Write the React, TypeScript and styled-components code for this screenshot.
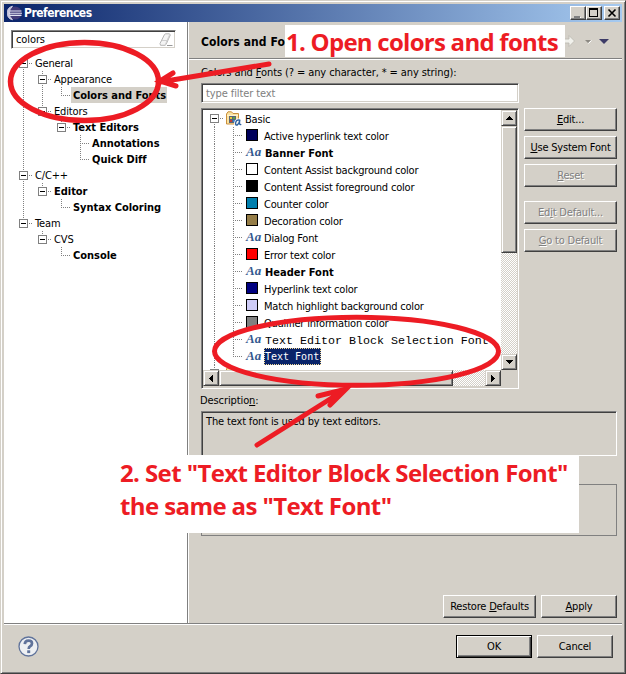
import React from 'react';
import styled, { createGlobalStyle, css } from 'styled-components';

const FACE = '#d4d0c8';
const RED = '#ed1c24';

const GlobalStyle = createGlobalStyle`
  * { box-sizing: border-box; }
  html, body { margin: 0; padding: 0; overflow: hidden; }
  body {
    font: 11px/14px "DejaVu Sans Condensed", "DejaVu Sans", sans-serif;
    font-stretch: condensed;
    letter-spacing: -0.1px;
    color: #000;
  }
  u { text-decoration: underline; text-underline-offset: 1px; text-decoration-thickness: 1px; }
`;

const raised = css`
  background: ${FACE};
  border: 1px solid;
  border-color: #fff #404040 #404040 #fff;
  box-shadow: inset -1px -1px 0 #808080;
`;
const sunken = css`
  border: 1px solid;
  border-color: #808080 #fff #fff #808080;
  box-shadow: inset 1px 1px 0 #404040, inset -1px -1px 0 ${FACE};
`;

const Window = styled.div`
  position: relative;
  width: 626px;
  height: 674px;
  background: ${FACE};
  border: 1px solid;
  border-color: ${FACE} #404040 #404040 ${FACE};
  box-shadow: inset 1px 1px 0 #fff, inset -1px -1px 0 #808080;
  padding: 3px;
  display: flex;
  flex-direction: column;
`;
const TitleBar = styled.header`
  height: 18px;
  flex: none;
  display: flex;
  align-items: center;
  padding: 0 2px 0 3px;
  background: linear-gradient(to right, #0a246a, #a6caf0);
`;
const Title = styled.h1`
  flex: 1;
  margin: 0 0 0 2px;
  color: #fff;
  font-size: 12px;
  line-height: 18px;
  font-weight: bold;
  letter-spacing: -0.5px;
`;
const WinButton = styled.button<{ $gap?: number }>`
  ${raised}
  width: 16px;
  height: 14px;
  padding: 0;
  margin-left: ${(p) => p.$gap ?? 0}px;
  display: flex;
  svg { display: block; }
`;
const Main = styled.div`
  display: flex;
  height: 601px;
  flex: none;
`;
const Sidebar = styled.aside`
  width: 185px;
  flex: none;
  background: #fff;
  border-right: 1px solid #fff;
  box-shadow: inset -1px 0 0 #808080;
  padding: 8px 0 0;
`;
const SearchBox = styled.div`
  ${sunken}
  width: 165px;
  height: 19px;
  margin: 0 0 6px 7px;
  padding: 0 2px 0 4px;
  display: flex;
  align-items: center;
  justify-content: space-between;
`;
const SideTree = styled.div`
  padding-left: 10px;
`;
const TreeRow = styled.div<{ $h: number }>`
  display: flex;
  align-items: center;
  height: ${(p) => p.$h}px;
  white-space: nowrap;
`;

const dotsV = 'repeating-linear-gradient(to bottom, #808080 0 1px, transparent 1px 2px)';
const dotsH = 'repeating-linear-gradient(to right, #808080 0 1px, transparent 1px 2px)';

/* One 19px indentation column: line above, line below, and a branch to the right. */
const Guide = styled.span<{ $up?: boolean; $down?: boolean; $branch?: boolean }>`
  width: 19px;
  height: 100%;
  flex: none;
  display: flex;
  align-items: flex-start;
  padding: 4px 0 0 5px;
  background:
    ${dotsV} 9px 0 / 1px ${(p) => (p.$up ? '9px' : '0')} no-repeat,
    ${dotsV} 9px 8px / 1px ${(p) => (p.$down ? '9px' : '0')} no-repeat,
    ${dotsH} 9px 8px / ${(p) => (p.$branch ? '10px' : '0')} 1px no-repeat;
`;
const Toggle = styled.span`
  width: 9px;
  height: 9px;
  border: 1px solid #808080;
  background: linear-gradient(#000, #000) center / 5px 1px no-repeat #fff;
`;
const NodeText = styled.span<{ $bold?: boolean; $active?: boolean }>`
  height: 16px;
  line-height: 18px;
  padding: 0 1px 0 2px;
  letter-spacing: ${(p) => (p.$bold ? '-0.03px' : '-0.15px')};
  font-weight: ${(p) => (p.$bold ? 'bold' : 'normal')};
  background: ${(p) => (p.$active ? FACE : 'transparent')};
`;

const Page = styled.section`
  flex: 1;
  min-width: 0;
`;
const PageHeader = styled.div`
  height: 38px;
  display: flex;
  align-items: center;
  justify-content: space-between;
  padding: 1px 12px 0 12px;
  border-bottom: 1px solid #fff;
  box-shadow: inset 0 -1px 0 #808080;
`;
const PageTitle = styled.h2`
  margin: 2px 0 0;
  font-size: 12px;
  font-weight: bold;
  letter-spacing: 0.1px;
`;
const PageBody = styled.div`
  padding: 5px 5px 0 12px;
`;
const FieldLabel = styled.div<{ $h: number; $shift?: number; $top?: number }>`
  height: ${(p) => p.$h}px;
  line-height: 16px;
  padding-top: ${(p) => p.$top ?? 0}px;
  margin-left: ${(p) => p.$shift ?? 0}px;
`;
const FilterInput = styled.div`
  ${sunken}
  width: 318px;
  height: 20px;
  background: #fff;
  color: #808080;
  line-height: 19px;
  padding-left: 4px;
`;
const Columns = styled.div`
  display: flex;
  gap: 5px;
  margin-top: 5px;
`;
const FontTree = styled.div`
  ${sunken}
  width: 318px;
  height: 281px;
  padding: 1px;
  background: ${FACE};
  display: grid;
  grid-template: 260px 16px / 298px 16px;
`;
const FontRows = styled.div`
  background: #fff;
  overflow: hidden;
  padding-left: 2px;
`;
const IconSlot = styled.span`
  width: 16px;
  height: 16px;
  flex: none;
  margin: 0 3px 0 2px;
  display: flex;
  align-items: center;
  padding-left: 1px;
  svg { display: block; flex: none; margin-left: -1px; }
`;
const Swatch = styled.i<{ $color: string }>`
  width: 12px;
  height: 12px;
  margin-top: -1px;
  border: 1px solid #000;
  background: ${(p) => p.$color};
`;
const FontGlyph = styled.i`
  font: italic bold 13px/14px "Liberation Serif", serif;
  letter-spacing: 0;
  color: #35598f;
  margin-top: -2px;
`;
const ItemText = styled.span<{ $kind?: Kind }>`
  line-height: 19px;
  height: 17px;
  letter-spacing: -0.2px;
  ${(p) => p.$kind === 'bold' && css`font-weight: bold;letter-spacing: 0;padding-left: 1px;`}
  ${(p) => p.$kind === 'mono' && css`font-family: "Liberation Mono", monospace;font-size: 11.67px;letter-spacing: 0;padding: 1px 0 0 1px;`}
  ${(p) => p.$kind === 'selected' && css`
    font-family: "DejaVu Sans Mono", monospace;
    font-size: 10px;
    letter-spacing: 0;
    line-height: 15px;
    padding: 0 1px 0 0;
    color: #fff;
    background: #0a246a;
    border: 1px dotted #f5db95;
  `}
`;
const ScrollBar = styled.div<{ $vertical?: boolean }>`
  display: flex;
  flex-direction: ${(p) => (p.$vertical ? 'column' : 'row')};
  background: repeating-conic-gradient(#fff 0 25%, ${FACE} 0 50%) 0 0 / 2px 2px;
`;
const ScrollPiece = styled.div<{ $len: number; $vertical?: boolean; $end?: boolean }>`
  background: ${FACE};
  border: 1px solid;
  border-color: ${FACE} #404040 #404040 ${FACE};
  box-shadow: inset 1px 1px 0 #fff, inset -1px -1px 0 #808080;
  width: ${(p) => (p.$vertical ? 16 : p.$len)}px;
  height: ${(p) => (p.$vertical ? p.$len : 16)}px;
  ${(p) => p.$end && (p.$vertical ? 'margin-top: auto;' : 'margin-left: auto;')}
  svg { display: block; }
`;
const ButtonColumn = styled.div`
  display: flex;
  flex-direction: column;
  gap: 5px;
`;
const Button = styled.button<{ $w?: number; $gap?: number; $primary?: boolean }>`
  ${raised}
  width: ${(p) => p.$w ?? 93}px;
  height: 23px;
  padding: 1px 0 0;
  margin-top: ${(p) => p.$gap ?? 0}px;
  font: inherit;
  font-stretch: inherit;
  letter-spacing: -0.2px;
  white-space: nowrap;
  color: #000;
  &:disabled { color: #808080; text-shadow: 1px 1px 0 #fff; }
  ${(p) => p.$primary && css`
    border-color: #000;
    box-shadow: inset 1px 1px 0 #fff, inset -1px -1px 0 #404040, inset -2px -2px 0 #808080;
  `}
`;
const Description = styled.div`
  ${sunken}
  box-shadow: inset 1px 1px 0 #404040;
  width: 416px;
  height: 45px;
  padding: 3px 4px;
  letter-spacing: -0.15px;
`;
const Preview = styled.div`
  width: 416px;
  height: 52px;
  margin-top: 28px;
  border: 1px solid #808080;
`;
const PageActions = styled.div`
  display: flex;
  justify-content: flex-end;
  gap: 5px;
  width: 416px;
  margin-top: 59px;
`;
const Footer = styled.footer`
  flex: 1;
  display: flex;
  align-items: center;
  gap: 5px;
  padding: 0 9px 1px 14px;
  border-top: 1px solid #808080;
  box-shadow: inset 0 1px 0 #fff;
`;
const HelpSlot = styled.span`
  flex: 1;
  svg { display: block; }
`;

/* Callouts lie over the dialog. */
const Callout = styled.div<{ $x: number; $y: number; $w: number; $h: number; $pad: string; $track: number }>`
  position: absolute;
  left: ${(p) => p.$x - 1}px;
  top: ${(p) => p.$y - 1}px;
  width: ${(p) => p.$w}px;
  height: ${(p) => p.$h}px;
  padding: ${(p) => p.$pad};
  background: #fff;
  color: ${RED};
  font: bold 24px/33px "Open Sans", "Noto Sans", sans-serif;
  letter-spacing: ${(p) => p.$track}px;
  white-space: nowrap;
`;
const Marks = styled.svg`
  position: absolute;
  left: -1px;
  top: -1px;
  pointer-events: none;
`;

type Kind = 'plain' | 'bold' | 'mono' | 'selected';
interface SideNode { text: string; bold?: boolean; active?: boolean; children?: SideNode[] }

const sideNodes: SideNode[] = [
  { text: 'General', children: [
    { text: 'Appearance', children: [{ text: 'Colors and Fonts', bold: true, active: true }] },
    { text: 'Editors', children: [
      { text: 'Text Editors', bold: true, children: [
        { text: 'Annotations', bold: true }, { text: 'Quick Diff', bold: true }] }] }] },
  { text: 'C/C++', children: [
    { text: 'Editor', bold: true, children: [{ text: 'Syntax Coloring', bold: true }] }] },
  { text: 'Team', children: [
    { text: 'CVS', children: [{ text: 'Console', bold: true }] }] },
];

const fontItems: { text: string; color?: string; kind?: Kind }[] = [
  { text: 'Active hyperlink text color', color: '#00005a' },
  { text: 'Banner Font', kind: 'bold' },
  { text: 'Content Assist background color', color: '#fff' },
  { text: 'Content Assist foreground color', color: '#000' },
  { text: 'Counter color', color: '#007fae' },
  { text: 'Decoration color', color: '#957d47' },
  { text: 'Dialog Font' },
  { text: 'Error text color', color: '#f00' },
  { text: 'Header Font', kind: 'bold' },
  { text: 'Hyperlink text color', color: '#000080' },
  { text: 'Match highlight background color', color: '#ceccf7' },
  { text: 'Qualifier information color', color: '#808080' },
  { text: 'Text Editor Block Selection Font', kind: 'mono' },
  { text: 'Text Font', kind: 'selected' },
];

function SideBranch({ nodes, trail = [] }: { nodes: SideNode[]; trail?: boolean[] }) {
  return (
    <>
      {nodes.map((n, i) => {
        const more = i < nodes.length - 1;
        return (
          <React.Fragment key={n.text}>
            <TreeRow $h={16}>
              {trail.map((t, k) => <Guide key={k} $up={t} $down={t} />)}
              <Guide $up={trail.length > 0 || i > 0} $down={more} $branch>{n.children && <Toggle />}</Guide>
              <NodeText $bold={n.bold} $active={n.active}>{n.text}</NodeText>
            </TreeRow>
            {n.children && <SideBranch nodes={n.children} trail={[...trail, more]} />}
          </React.Fragment>
        );
      })}
    </>
  );
}

const EclipseIcon = () => (
  <svg width="15" height="16" viewBox="0 0 15 16">
    <circle cx="8" cy="8" r="6.6" fill="#423b78" />
    <path d="M5.5 1.2A7 7 0 0 0 5.5 14.8A9 9 0 0 1 5.5 1.2" fill="#c9c7dd" stroke="#c9c7dd" />
    <path d="M2.5 6h12M2 8.2h13M2.5 10.4h12" stroke="#dfe2f1" strokeWidth="1.1" />
  </svg>
);
const EraserIcon = () => (
  <svg width="14" height="14" viewBox="0 0 14 14" fill="none" stroke="#b4b4b4">
    <path d="M1 10.5L5.5 1.5Q6 .8 7 .8H10.5L11.3 2L7 11.5L6 12.3H1.5Z" fill="#f4f4f4" />
    <path d="M2.8 7.5H8M6.2 12L8 7.5L10.5 2" stroke="#d0d0d0" />
    <path d="M8 12.5h5.5" stroke="#999" />
  </svg>
);
const FolderIcon = () => (
  <svg width="16" height="16" viewBox="0 0 16 16">
    <path d="M.5 13V3L2 .8H5.5L7 2.5H12.5V13Z" fill="#fbe3a1" stroke="#c98f3c" />
    <path d="M1 4.5h11" stroke="#fff3cf" />
    <rect x="3" y="5" width="7" height="7" fill="#596577" />
    <path d="M4 6h2v2H4z" fill="#e9c53a" /><path d="M7 6h2v2H7z" fill="#56a04b" />
    <path d="M4 9h2v2H4z" fill="#c43b35" /><path d="M7 9h2v2H7z" fill="#3c7fcb" />
    <g fill="none" strokeLinecap="round">
      <path d="M13.8 9.2Q10.2 8.2 9.6 12Q9.4 14.4 11.2 14Q13 13.2 13.8 9.2Q12.8 13.8 14.8 13.6" stroke="#fff" strokeWidth="3" />
      <path d="M13.8 9.2Q10.2 8.2 9.6 12Q9.4 14.4 11.2 14Q13 13.2 13.8 9.2Q12.8 13.8 14.8 13.6" stroke="#2f619f" strokeWidth="1.4" />
    </g>
  </svg>
);
const HelpIcon = () => (
  <svg width="22" height="22" viewBox="0 0 22 22">
    <circle cx="10.5" cy="10.5" r="9.5" fill="#eef0f3" stroke="#60739b" strokeWidth="1.3" />
    <path d="M6.8 8.2Q7 4.7 10.5 4.7Q14 4.7 14 7.5Q14 9.2 12.2 10.2Q10.7 11 10.7 13" fill="none" stroke="#60739b" strokeWidth="2.7" />
    <path d="M9.2 14.3h3v2.8h-3z" fill="#60739b" />
  </svg>
);
const NavIcons = () => (
  <svg width="47" height="14" viewBox="0 0 47 14">
    <path d="M0 5H6V1.5L11.5 7L6 12.5V9H0Z" fill="#f1f1ec" stroke="#bab8b0" strokeWidth=".8" />
    <path d="M22 6h6l-3 3z" fill="#8c8983" /><path d="M25.5 9.5L28.5 6.5" stroke="#fff" strokeWidth="1" />
    <path d="M36 5h10L41 10Z" fill="#3d3b67" />
  </svg>
);

const arrows = {
  up: 'M7 5h1v1h1v1h1v1h1v1H4V8h1V7h1V6h1z',
  down: 'M4 5h7v1h-1v1H9v1H8v1H7V8H6V7H5V6H4z',
  left: 'M5 7h1V6h1V5h1V4h1v7H8v-1H7V9H6V8H5z',
  right: 'M5 4h1v1h1v1h1v1h1v1H8v1H7v1H6v1H5z',
};
const Arrow = ({ dir }: { dir: keyof typeof arrows }) => (
  <svg width="14" height="14" viewBox="0 0 14 14" shapeRendering="crispEdges"><path d={arrows[dir]} /></svg>
);

export default function App() {
  return (
    <>
      <GlobalStyle />
      <Window>
        <TitleBar>
          <EclipseIcon />
          <Title>Preferences</Title>
          <WinButton aria-label="Minimize"><svg width="14" height="12"><path d="M4 10h6v1H4z" fill="#fff" /><path d="M3 9h6v2H3z" fill="#808080" /></svg></WinButton>
          <WinButton aria-label="Maximize"><svg width="14" height="12" shapeRendering="crispEdges"><path d="M2 1h9v9H2zM3 3v6h7V3z" fillRule="evenodd" /></svg></WinButton>
          <WinButton aria-label="Close" $gap={2}><svg width="14" height="12"><path d="M3.5 2.5l7 7M10.5 2.5l-7 7" stroke="#000" strokeWidth="1.6" /></svg></WinButton>
        </TitleBar>
        <Main>
          <Sidebar>
            <SearchBox><span>colors</span><EraserIcon /></SearchBox>
            <SideTree><SideBranch nodes={sideNodes} /></SideTree>
          </Sidebar>
          <Page>
            <PageHeader><PageTitle>Colors and Fonts</PageTitle><NavIcons /></PageHeader>
            <PageBody>
              <FieldLabel $h={18}>Colors and <u>F</u>onts (? = any character, * = any string):</FieldLabel>
              <FilterInput>type filter text</FilterInput>
              <Columns>
                <FontTree>
                  <FontRows>
                    <TreeRow $h={17}>
                      <Guide $down $branch><Toggle /></Guide>
                      <IconSlot><FolderIcon /></IconSlot>
                      <ItemText>Basic</ItemText>
                    </TreeRow>
                    {fontItems.map((it, i) => (
                      <TreeRow $h={17} key={it.text}>
                        <Guide $up $down />
                        <Guide $up $down={i < fontItems.length - 1} $branch />
                        <IconSlot>{it.color ? <Swatch $color={it.color} /> : <FontGlyph>Aa</FontGlyph>}</IconSlot>
                        <ItemText $kind={it.kind}>{it.text}</ItemText>
                      </TreeRow>
                    ))}
                    <TreeRow $h={17}>
                      <Guide $up $branch><Toggle /></Guide>
                      <IconSlot><FolderIcon /></IconSlot>
                    </TreeRow>
                  </FontRows>
                  <ScrollBar $vertical>
                    <ScrollPiece $vertical $len={16}><Arrow dir="up" /></ScrollPiece>
                    <ScrollPiece $vertical $len={127} />
                    <ScrollPiece $vertical $len={16} $end><Arrow dir="down" /></ScrollPiece>
                  </ScrollBar>
                  <ScrollBar>
                    <ScrollPiece $len={16}><Arrow dir="left" /></ScrollPiece>
                    <ScrollPiece $len={234} />
                    <ScrollPiece $len={16} $end><Arrow dir="right" /></ScrollPiece>
                  </ScrollBar>
                </FontTree>
                <ButtonColumn>
                  <Button><u>E</u>dit...</Button>
                  <Button><u>U</u>se System Font</Button>
                  <Button disabled><u>R</u>eset</Button>
                  <Button disabled $gap={9}>Ed<u>i</u>t Default...</Button>
                  <Button disabled><u>G</u>o to Default</Button>
                </ButtonColumn>
              </Columns>
              <FieldLabel $h={22} $top={4} $shift={-1}>Descriptio<u>n</u>:</FieldLabel>
              <Description>The text font is used by text editors.</Description>
              <Preview />
              <PageActions>
                <Button>Restore <u>D</u>efaults</Button>
                <Button $w={76}><u>A</u>pply</Button>
              </PageActions>
            </PageBody>
          </Page>
        </Main>
        <Footer>
          <HelpSlot><HelpIcon /></HelpSlot>
          <Button $w={76} $primary>OK</Button>
          <Button $w={76}>Cancel</Button>
        </Footer>
        <Callout $x={285} $y={25} $w={280} $h={32} $pad="0 0 0 1px" $track={-0.74}>1. Open colors and fonts</Callout>
        <Callout $x={110} $y={455} $w={469} $h={78} $pad="1px 0 0 10px" $track={-0.6}>
          2. Set "Text Editor Block Selection Font"<br />the same as "Text Font"
        </Callout>
        <Marks width="626" height="674" fill="none" stroke={RED} strokeWidth="5" strokeLinecap="round">
          <ellipse cx="84.5" cy="81.5" rx="74" ry="39" strokeWidth="5.5" />
          <path d="M269 64L160 82M173 73L160 81L176 86" />
          <ellipse cx="356.5" cy="351.3" rx="142" ry="34" />
          <path d="M257 445L346 389M318 396L346 389L330 405" />
        </Marks>
      </Window>
    </>
  );
}
